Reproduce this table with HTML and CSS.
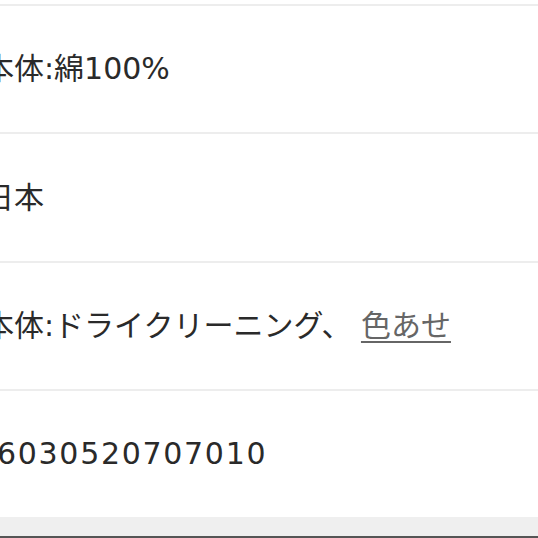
FILE: index.html
```
<!DOCTYPE html>
<html lang="ja">
<head>
  <meta charset="UTF-8">
  <meta name="viewport" content="width=device-width, initial-scale=1.0">
  <title>商品詳細</title>
  <link rel="stylesheet" href="styles.css">
</head>
<body>
  <main class="spec">
    <ul class="spec__list">
      <li class="spec__row"><span class="spec__value">本体:綿100%</span></li>
      <li class="spec__row"><span class="spec__value">日本</span></li>
      <li class="spec__row">
        <span class="spec__value">本体:ドライクリーニング、 <a class="spec__link" href="#">色あせ</a></span>
      </li>
      <li class="spec__row spec__row--last"><span class="spec__value spec__value--code">6030520707010</span></li>
    </ul>
    <div class="spec__bar"></div>
  </main>
</body>
</html>
```

FILE: styles.css
```
*,
*::before,
*::after {
  box-sizing: border-box;
}
html,
body {
  height: 100%;
}
body {
  margin: 0;
  padding: 0;
  background: #fff;
  color: #2a2a2a;
  font-family: "DejaVu Sans", "Noto Sans CJK JP", sans-serif;
  font-size: 30px;
  overflow: hidden;
}
.spec {
  display: flex;
  flex-direction: column;
  height: 100%;
  padding-top: 4px;
}
.spec__list {
  list-style: none;
  margin: 0;
  padding: 0;
  flex: 1;
  display: flex;
  flex-direction: column;
}
.spec__row {
  height: 128.4px;
  border-top: 2px solid #ededed;
  display: flex;
  align-items: center;
  white-space: nowrap;
}
.spec__row--last {
  height: auto;
  flex: 1;
}
.spec__value {
  margin-left: -16px;
  line-height: 1;
}
.spec__value--code {
  margin-left: -3px;
  letter-spacing: 1.7px;
}
.spec__link {
  color: #666;
  text-decoration: underline;
  text-decoration-thickness: 2px;
  text-underline-offset: 5px;
}
.spec__bar {
  height: 21px;
  background: #efefef;
  border-bottom: 2px solid #555;
}
```
